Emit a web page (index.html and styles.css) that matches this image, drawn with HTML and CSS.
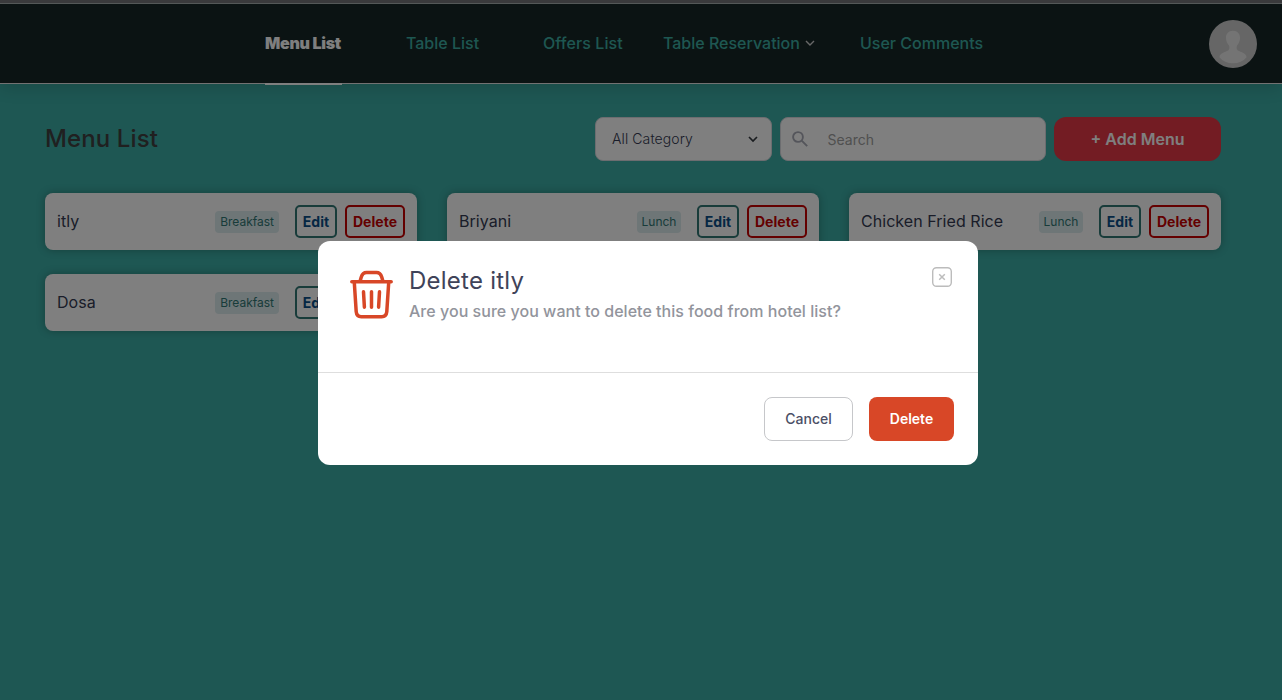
FILE: index.html
```html
<!DOCTYPE html>
<html lang="en">
<head>
<meta charset="utf-8">
<title>Menu List</title>
<link rel="stylesheet" href="styles.css">
</head>
<body>
<header class="header">
  <nav class="nav">
    <a class="nav-link active">Menu List</a>
    <a class="nav-link tables">Table List</a>
    <a class="nav-link offers">Offers List</a>
    <a class="nav-link reservation">Table Reservation
      <svg class="nav-arrow" width="10" height="7" viewBox="0 0 10 7"><path d="M1 1l4 4 4-4" fill="none" stroke="#d0d0d0" stroke-width="1.4"/></svg>
    </a>
    <a class="nav-link comments">User Comments</a>
  </nav>
  <svg class="avatar" width="48" height="48" viewBox="0 0 48 48">
    <circle cx="24" cy="24" r="24" fill="#cdcdcd"/>
    <path d="M24 10.700c-4.500 0-7.200 3.200-7 7.500.2 3 1.300 5.500 3 7.300.8 1.800.5 3.900-.8 4.900-3 1.700-8.700 2.500-8.700 6.800 3.300 4 8 6 13.500 6s10.200-2 13.500-6c0-4.300-5.700-5.100-8.700-6.800-1.300-1-1.600-3.100-.8-4.900 1.700-1.800 2.800-4.300 3-7.300.2-4.300-2.500-7.500-7-7.500z" fill="#e9e9e9"/>
  </svg>
</header>
<main class="page">
  <div class="toolbar">
    <h1 class="title">Menu List</h1>
    <div class="select"><span>All Category</span>
      <svg width="10" height="7" viewBox="0 0 10 7"><path d="M1 1l4 4 4-4" fill="none" stroke="#343a40" stroke-width="1.700"/></svg>
    </div>
    <div class="search">
      <svg width="16" height="16" viewBox="0 0 16 16" fill="none" stroke="#a9abb6" stroke-width="1.900"><circle cx="6" cy="6" r="4.900"/><path d="M9.700 9.700l5.500 5.500"/></svg>
      <span>Search</span>
    </div>
    <button class="add">+ Add Menu</button>
  </div>
  <section class="grid">
    <article class="card"><span class="name">itly</span><span class="tag">Breakfast</span><button class="btn edit">Edit</button><button class="btn delete">Delete</button></article>
    <article class="card"><span class="name">Briyani</span><span class="tag lunch">Lunch</span><button class="btn edit">Edit</button><button class="btn delete">Delete</button></article>
    <article class="card"><span class="name">Chicken Fried Rice</span><span class="tag lunch">Lunch</span><button class="btn edit">Edit</button><button class="btn delete">Delete</button></article>
    <article class="card"><span class="name">Dosa</span><span class="tag">Breakfast</span><button class="btn edit">Edit</button><button class="btn delete">Delete</button></article>
  </section>
</main>
<div class="overlay">
  <div class="modal" role="dialog">
    <div class="modal-head">
      <svg class="trash" width="43" height="50" viewBox="0 0 43 50" fill="none" stroke="#d84727" stroke-width="3.500" stroke-linecap="round" stroke-linejoin="round">
        <path d="M1.800 12.800h39.400M10 12.500l1.200-4.300C12.200 5 13.700 3.500 16.500 3.500h10c2.800 0 4.300 1.500 5.300 4.700L33 12.500"/>
        <path d="M4.300 13.500l1.900 29.200c.3 3.500 1.900 5 5.100 5h20.400c3.200 0 4.800-1.500 5.100-5l1.900-29.200"/>
        <path d="M13.500 22.800l.9 15.400M21.500 22.800v15.400M29.500 22.800l-.9 15.400"/>
      </svg>
      <div class="copy">
        <h2 class="modal-title">Delete itly</h2>
        <p class="modal-text">Are you sure you want to delete this food from hotel list?</p>
      </div>
      <svg class="close" width="20" height="20" viewBox="0 0 20 20" fill="none" stroke="#bcbcbc"><rect x=".7" y=".7" width="18.600" height="18.600" rx="3.800" stroke-width="1.400"/><path d="M7.200 7.200l5.600 5.600M12.800 7.200l-5.600 5.600" stroke-width="1.500"/></svg>
    </div>
    <div class="modal-foot">
      <button class="cancel">Cancel</button>
      <button class="confirm">Delete</button>
    </div>
  </div>
</div>
</body>
</html>
```
FILE: styles.css
```css
* { box-sizing: border-box; }
body {
  margin: 0;
  height: 700px;
  overflow: hidden;
  background: #3caea6;
  font-family: Inter, "Liberation Sans", sans-serif;
  color: #343a52;
}
button { font-family: inherit; padding: 0; }
.header {
  height: 84px;
  display: flex;
  justify-content: space-between;
  align-items: flex-start;
  padding: 0 25px 0 265px;
  background: linear-gradient(#747578 3px, #a9b0b1 3px, #a9b0b1 4px, #172627 4px);
  border-bottom: 1px solid #e4e4e4;
  box-shadow: 0 4px 16px rgba(0, 0, 0, .14);
}
.nav { display: flex; height: 85px; }
.nav-link {
  display: flex;
  align-items: center;
  padding-top: 3px;
  height: 85px;
  white-space: nowrap;
  font-size: 16px;
  font-weight: 500;
  color: #3caea3;
}
.active {
  width: 77px;
  font-weight: 900;
  letter-spacing: -.3px;
  color: #fff;
  border-bottom: 2px solid #fff;
}
.nav-link:not(.active) { height: 83px; }
.tables { margin-left: 64px; width: 73px; }
.offers { margin-left: 64px; width: 80px; letter-spacing: .08px; }
.reservation { margin-left: 40px; width: 152px; }
.comments { margin-left: 45px; }
.nav-arrow { margin-left: 5px; }
.avatar { margin-top: 20px; }
.page { padding: 33px 61px 0 45px; }
.toolbar { display: flex; height: 44px; gap: 8px; align-items: stretch; }
.title { margin: 0 auto 0 0; font-size: 24px; line-height: 43px; font-weight: 500; letter-spacing: .12px; color: #404040; }
.select {
  width: 177px;
  padding: 0 13px 0 16px;
  display: flex;
  justify-content: space-between;
  align-items: center;
  background: #fff;
  border: 1px solid #d9dbe0;
  border-radius: 8px;
  font-size: 14px;
  font-weight: 300;
}
.select span { padding-bottom: 1px; letter-spacing: .1px; }
.search {
  width: 266px;
  display: flex;
  align-items: center;
  gap: 19.5px;
  padding-left: 11px;
  background: #fff;
  border: 1px solid #d9dbe0;
  border-radius: 8px;
  font-size: 14px;
  color: #a0a0a0;
}
.add {
  width: 167px;
  border: 0;
  border-radius: 12px;
  background: #e63946;
  color: #fff;
  font-size: 16px;
  font-weight: 600;
}
.grid {
  margin-top: 32px;
  display: grid;
  grid-template-columns: repeat(3, 372px);
  grid-auto-rows: 57px;
  gap: 24px 30px;
}
.card {
  display: flex;
  align-items: center;
  padding: 0 12px;
  background: #fff;
  border-radius: 8px;
  box-shadow: 0 0 8px rgba(0, 0, 0, .28);
}
.name { margin-right: auto; padding-bottom: 2px; font-size: 16px; letter-spacing: .05px; }
.tag {
  height: 22px;
  line-height: 22px;
  padding: 0 5px;
  margin-right: 16px;
  border-radius: 4px;
  background: #dcecee;
  color: #317875;
  font-size: 12px;
}
.lunch { width: 44px; padding: 0 4.500px; }
.btn {
  height: 33px;
  background: transparent;
  border: 2px solid #317875;
  border-radius: 5px;
  font-size: 14px;
  font-weight: 700;
}
.edit { width: 42px; color: #0b4f88; letter-spacing: .1px; }
.delete { width: 60px; margin-left: 8px; color: #c80000; border-color: #c80000; letter-spacing: .05px; }
.overlay {
  position: fixed;
  inset: 0;
  padding: 241px 0 0 318px;
  background: rgba(0, 0, 0, .5);
}
.modal { width: 660px; height: 224px; background: #fff; border-radius: 12px; }
.modal-head {
  height: 132px;
  display: flex;
  align-items: flex-start;
  padding: 26px 26px 0 32px;
  border-bottom: 1px solid #dedede;
}
.trash { margin-top: 2px; }
.copy { margin-left: 16px; flex: 1; }
.modal-title { margin: 0; font-size: 24px; line-height: 28px; font-weight: 400; letter-spacing: .24px; color: #3f4359; }
.modal-text { margin: 4px 0 0; font-size: 16px; line-height: 24px; font-weight: 500; letter-spacing: .03px; color: #92949c; }
.modal-foot { display: flex; justify-content: flex-end; gap: 16px; padding: 24px 24px 0 0; }
.cancel, .confirm { height: 44px; padding-bottom: 2px; border-radius: 8px; font-size: 14px; }
.cancel { width: 89px; border: 1px solid #c6c7ca; background: #fff; color: #4b4f66; font-weight: 500; }
.confirm { width: 85px; border: 0; background: #d84727; color: #fff; font-weight: 600; }
```
